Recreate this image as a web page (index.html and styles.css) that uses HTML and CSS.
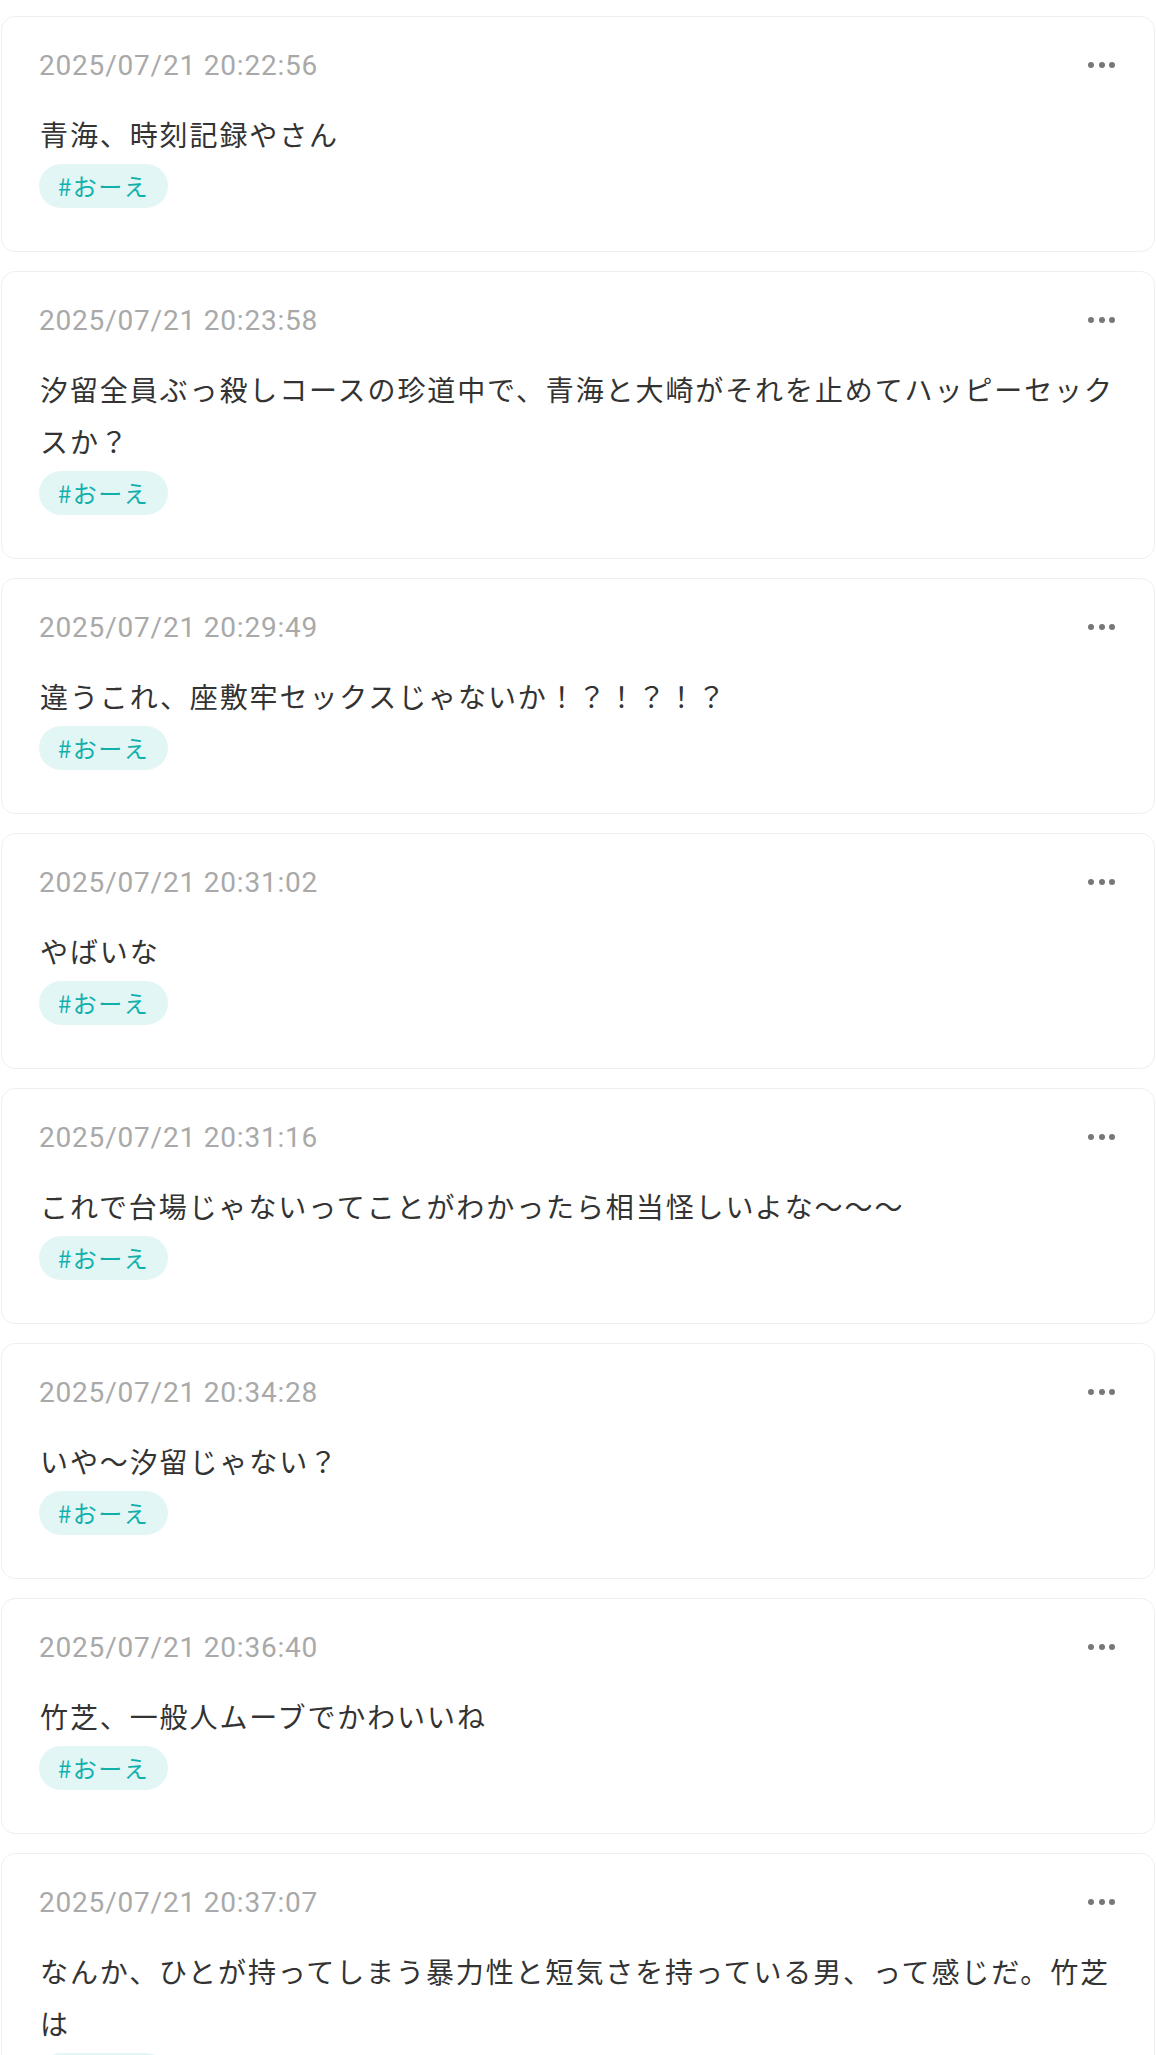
FILE: index.html
```html
<!DOCTYPE html>
<html lang="ja">
<head>
<meta charset="utf-8">
<link rel="stylesheet" href="styles.css">
</head>
<body>
<main class="list">
  <article class="card">
    <header class="card-head"><time class="date">2025/07/21 20:22:56</time><span class="more"><i></i><i></i><i></i></span></header>
    <p class="text">青海、時刻記録やさん</p>
    <div class="tags"><span class="tag">#おーえ</span></div>
  </article>
  <article class="card">
    <header class="card-head"><time class="date">2025/07/21 20:23:58</time><span class="more"><i></i><i></i><i></i></span></header>
    <p class="text">汐留全員ぶっ殺しコースの珍道中で、青海と大崎がそれを止めてハッピーセックスか？</p>
    <div class="tags"><span class="tag">#おーえ</span></div>
  </article>
  <article class="card">
    <header class="card-head"><time class="date">2025/07/21 20:29:49</time><span class="more"><i></i><i></i><i></i></span></header>
    <p class="text">違うこれ、座敷牢セックスじゃないか！？！？！？</p>
    <div class="tags"><span class="tag">#おーえ</span></div>
  </article>
  <article class="card">
    <header class="card-head"><time class="date">2025/07/21 20:31:02</time><span class="more"><i></i><i></i><i></i></span></header>
    <p class="text">やばいな</p>
    <div class="tags"><span class="tag">#おーえ</span></div>
  </article>
  <article class="card">
    <header class="card-head"><time class="date">2025/07/21 20:31:16</time><span class="more"><i></i><i></i><i></i></span></header>
    <p class="text">これで台場じゃないってことがわかったら相当怪しいよな〜〜〜</p>
    <div class="tags"><span class="tag">#おーえ</span></div>
  </article>
  <article class="card">
    <header class="card-head"><time class="date">2025/07/21 20:34:28</time><span class="more"><i></i><i></i><i></i></span></header>
    <p class="text">いや〜汐留じゃない？</p>
    <div class="tags"><span class="tag">#おーえ</span></div>
  </article>
  <article class="card">
    <header class="card-head"><time class="date">2025/07/21 20:36:40</time><span class="more"><i></i><i></i><i></i></span></header>
    <p class="text">竹芝、一般人ムーブでかわいいね</p>
    <div class="tags"><span class="tag">#おーえ</span></div>
  </article>
  <article class="card">
    <header class="card-head"><time class="date">2025/07/21 20:37:07</time><span class="more"><i></i><i></i><i></i></span></header>
    <p class="text">なんか、ひとが持ってしまう暴力性と短気さを持っている男、って感じだ。竹芝は</p>
    <div class="tags"><span class="tag">#おーえ</span></div>
  </article>
</main>
</body>
</html>
```

FILE: styles.css
```css
html, body {
  margin: 0;
  padding: 0;
  background: #ffffff;
}

body {
  font-family: "Noto Sans CJK JP", "Noto Sans", sans-serif;
  color: #333333;
}

.list {
  padding: 16px 1px 0;
  display: flex;
  flex-direction: column;
  gap: 19px;
}

.card {
  border: 1px solid #efefef;
  border-radius: 14px;
  padding: 28px 38px 43px 37px;
  background: #fff;
}

.card-head {
  display: flex;
  align-items: center;
  justify-content: space-between;
  height: 40px;
}

.date {
  font-family: Roboto, "Noto Sans", sans-serif;
  font-size: 28px;
  letter-spacing: 0.8px;
  color: #a9a9a9;
}

.more {
  display: flex;
  gap: 4.5px;
  margin-right: 1px;
}

.more i {
  display: block;
  width: 6px;
  height: 6px;
  border-radius: 50%;
  background: #777777;
}

.text {
  margin: 23px 0 4px 1px;
  font-size: 28px;
  line-height: 52px;
  letter-spacing: 1.9px;
  color: #333333;
}

.tags {
  display: flex;
}

.tag {
  display: inline-block;
  height: 44px;
  line-height: 44px;
  padding: 0 19px;
  border-radius: 22px;
  background: #e3f6f6;
  color: #12b0ac;
  font-size: 24px;
  letter-spacing: 1.5px;
}
```
